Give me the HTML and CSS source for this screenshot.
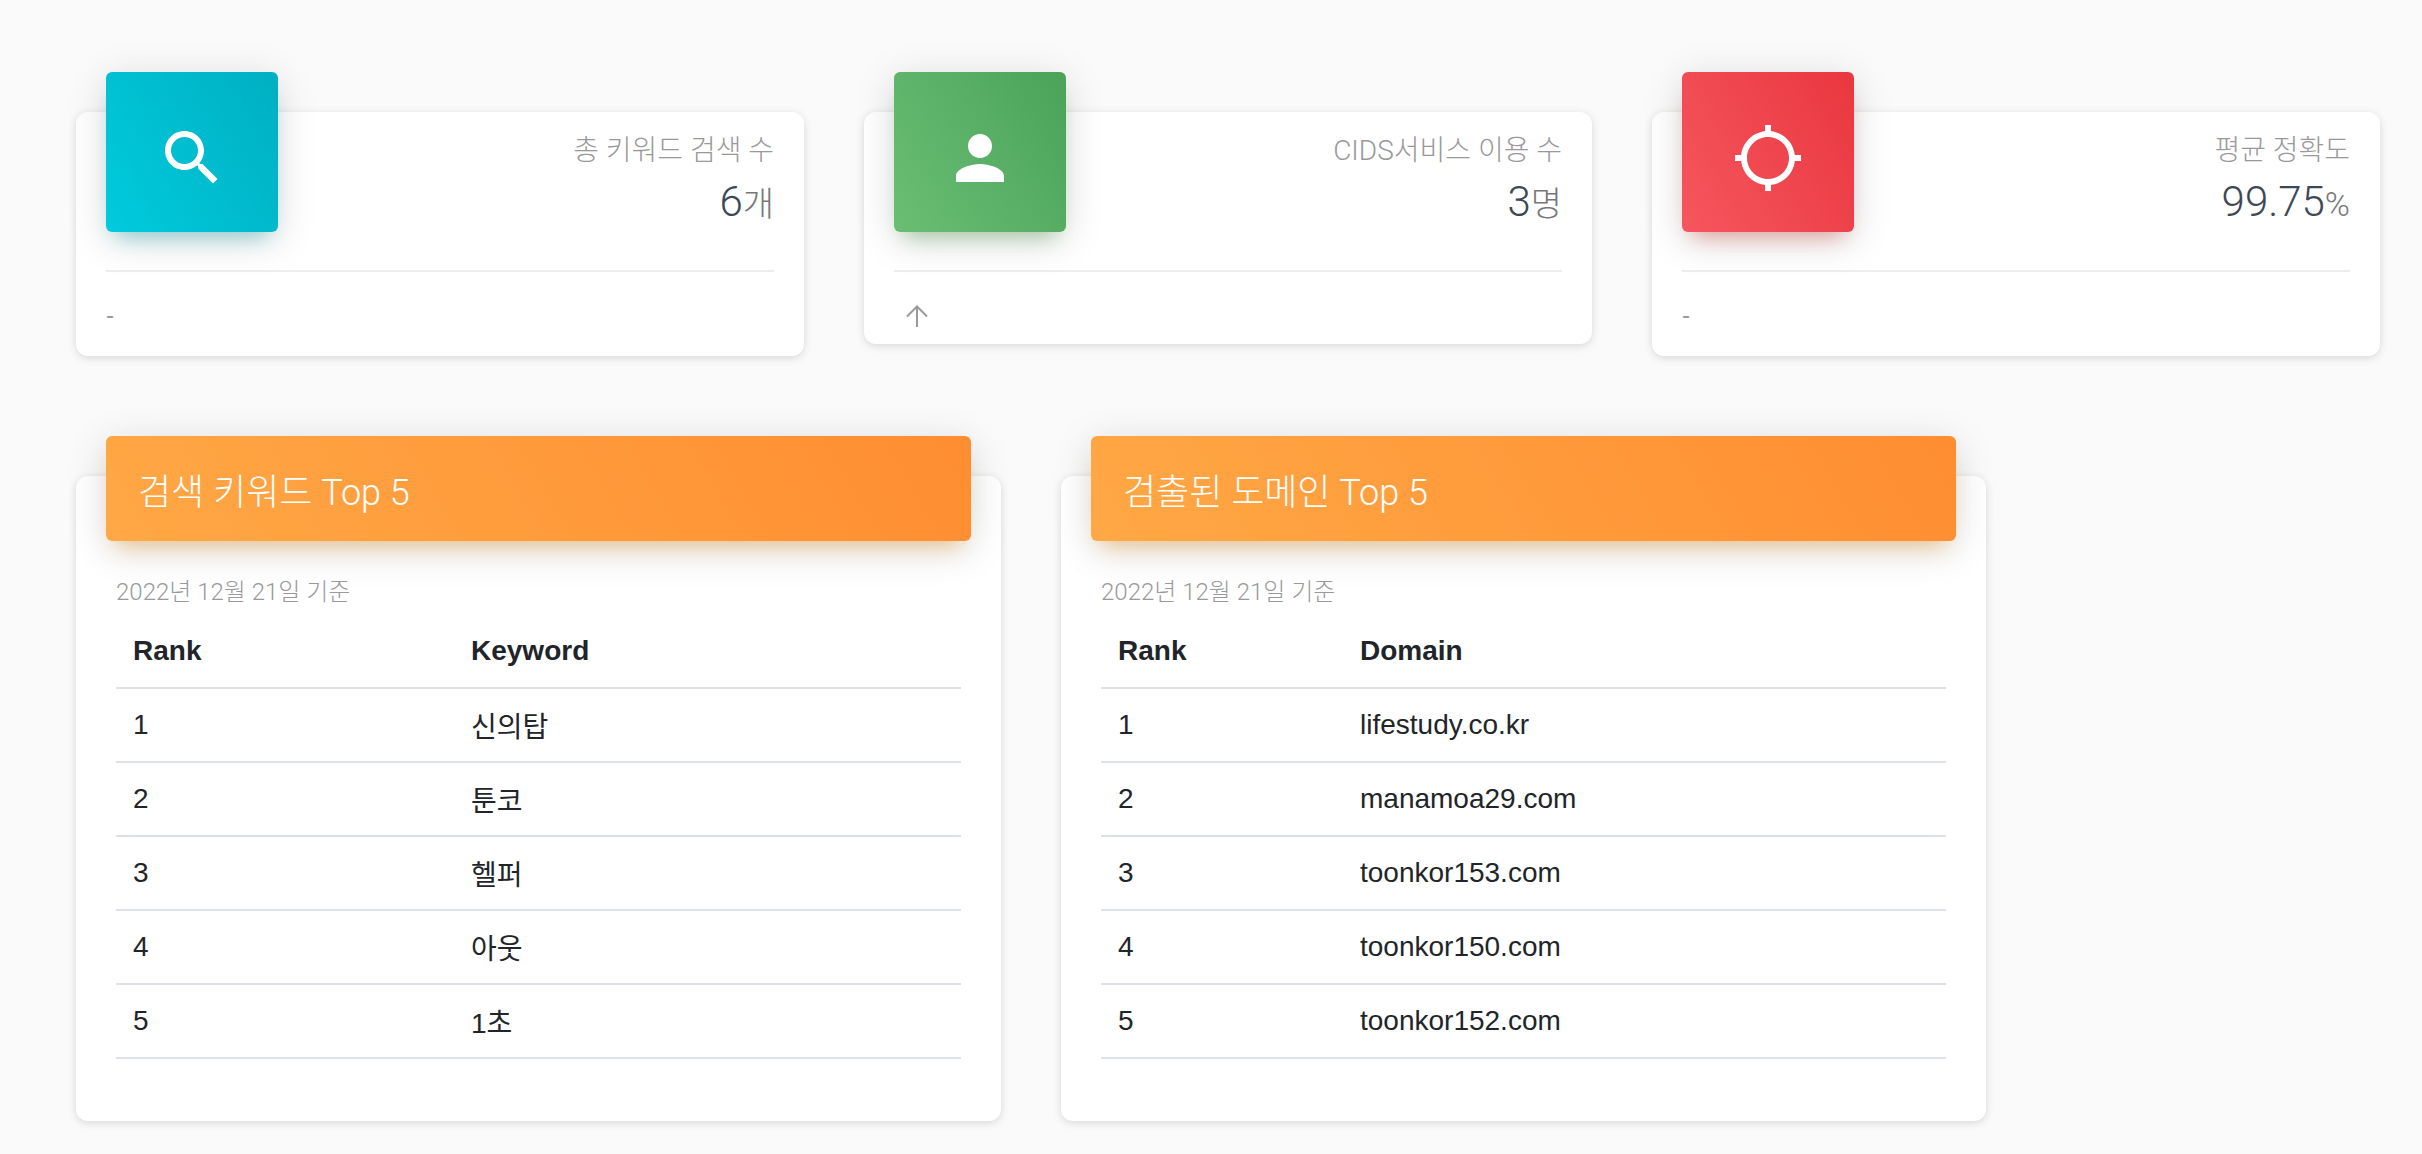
FILE: index.html
```html
<!DOCTYPE html>
<html lang="ko">
<head>
<meta charset="utf-8">
<title>CIDS Dashboard</title>
<link rel="stylesheet" href="styles.css">
</head>
<body>
<main class="page">
  <section class="stats">
    <article class="stat">
      <div class="stat-top">
        <div class="stat-icon cyan">
          <svg viewBox="0 0 24 24"><path d="M15.5 14h-.79l-.28-.27C15.41 12.59 16 11.11 16 9.5 16 5.91 13.09 3 9.5 3S3 5.91 3 9.5 5.91 16 9.5 16c1.61 0 3.09-.59 4.23-1.57l.27.28v.79l5 4.99L20.49 19l-4.99-5zm-6 0C7.01 14 5 11.99 5 9.5S7.01 5 9.5 5 14 7.01 14 9.5 11.99 14 9.5 14z"/></svg>
        </div>
        <div class="stat-text">
          <p class="stat-label">총 키워드 검색 수</p>
          <h3 class="stat-value">6<small>개</small></h3>
        </div>
      </div>
      <div class="stat-foot">-</div>
    </article>
    <article class="stat">
      <div class="stat-top">
        <div class="stat-icon green">
          <svg viewBox="0 0 24 24"><path d="M12 12c2.21 0 4-1.79 4-4s-1.79-4-4-4-4 1.79-4 4 1.79 4 4 4zm0 2c-2.67 0-8 1.34-8 4v2h16v-2c0-2.66-5.33-4-8-4z"/></svg>
        </div>
        <div class="stat-text">
          <p class="stat-label">CIDS서비스 이용 수</p>
          <h3 class="stat-value">3<small>명</small></h3>
        </div>
      </div>
      <div class="stat-foot stat-foot-icon">
        <svg class="arrow" viewBox="0 0 22 22"><path d="M11 22V1.5M1 11.5 11 1.5l10 10"/></svg>
      </div>
    </article>
    <article class="stat">
      <div class="stat-top">
        <div class="stat-icon red">
          <svg viewBox="0 0 24 24"><path d="M20.94 11c-.46-4.17-3.77-7.48-7.94-7.94V1h-2v2.06C6.83 3.52 3.52 6.83 3.06 11H1v2h2.06c.46 4.17 3.77 7.48 7.94 7.94V23h2v-2.06c4.17-.46 7.48-3.77 7.94-7.94H23v-2h-2.06zM12 19c-3.87 0-7-3.13-7-7s3.13-7 7-7 7 3.13 7 7-3.13 7-7 7z"/></svg>
        </div>
        <div class="stat-text">
          <p class="stat-label">평균 정확도</p>
          <h3 class="stat-value">99.75<small>%</small></h3>
        </div>
      </div>
      <div class="stat-foot">-</div>
    </article>
  </section>

  <section class="panels">
    <article class="panel">
      <header class="panel-head"><h4>검색 키워드 Top 5</h4></header>
      <div class="panel-body">
        <p class="panel-date">2022년 12월 21일 기준</p>
        <table class="rank-table keyword-table">
          <thead><tr><th>Rank</th><th>Keyword</th></tr></thead>
          <tbody>
            <tr><td>1</td><td>신의탑</td></tr>
            <tr><td>2</td><td>툰코</td></tr>
            <tr><td>3</td><td>헬퍼</td></tr>
            <tr><td>4</td><td>아웃</td></tr>
            <tr><td>5</td><td>1초</td></tr>
          </tbody>
        </table>
      </div>
    </article>
    <article class="panel">
      <header class="panel-head"><h4>검출된 도메인 Top 5</h4></header>
      <div class="panel-body">
        <p class="panel-date">2022년 12월 21일 기준</p>
        <table class="rank-table domain-table">
          <thead><tr><th>Rank</th><th>Domain</th></tr></thead>
          <tbody>
            <tr><td>1</td><td>lifestudy.co.kr</td></tr>
            <tr><td>2</td><td>manamoa29.com</td></tr>
            <tr><td>3</td><td>toonkor153.com</td></tr>
            <tr><td>4</td><td>toonkor150.com</td></tr>
            <tr><td>5</td><td>toonkor152.com</td></tr>
          </tbody>
        </table>
      </div>
    </article>
  </section>
</main>
</body>
</html>
```

FILE: styles.css
```css
* { box-sizing: border-box; }

html, body {
  margin: 0;
  height: 100%;
  overflow: hidden;
  background: #fafafa;
}

body {
  font-family: "Liberation Sans", "Noto Sans CJK KR", sans-serif;
  color: #212529;
}

.page {
  padding: 112px 42px 0 76px;
}

/* stat cards */
.stats {
  display: flex;
  gap: 60px;
  align-items: flex-start;
}

.stat {
  width: 728px;
  background: #fff;
  border-radius: 12px;
  box-shadow: 0 2px 8px rgba(0, 0, 0, .14);
}

.stat-top {
  display: flex;
  justify-content: space-between;
  margin: 0 30px;
  height: 160px;
  border-bottom: 2px solid #eee;
}

.stat-icon {
  width: 172px;
  height: 160px;
  margin-top: -40px;
  padding-top: 50px;
  border-radius: 6px;
  display: flex;
  justify-content: center;
  align-items: flex-start;
}

.stat-icon svg {
  width: 72px;
  height: 72px;
  fill: #fff;
}

.cyan {
  background: linear-gradient(60deg, #00cbdd, #00afc2);
  box-shadow: 0 8px 40px rgba(0, 0, 0, .14), 0 14px 20px -10px rgba(0, 172, 193, .4);
}

.green {
  background: linear-gradient(60deg, #6abe74, #4aa359);
  box-shadow: 0 8px 40px rgba(0, 0, 0, .14), 0 14px 20px -10px rgba(67, 160, 71, .4);
}

.red {
  background: linear-gradient(60deg, #f6565f, #e9373f);
  box-shadow: 0 8px 40px rgba(0, 0, 0, .14), 0 14px 20px -10px rgba(229, 57, 53, .4);
}

.stat-text {
  text-align: right;
  padding-top: 20px;
}

.stat-label {
  margin: 0;
  font-family: Roboto, "Noto Sans CJK KR", sans-serif;
  font-weight: 300;
  font-size: 28px;
  line-height: 38px;
  color: #999;
}

.stat-value {
  margin: 9px 0 0;
  font-family: Roboto, "Noto Sans CJK KR", sans-serif;
  font-weight: 300;
  font-size: 42px;
  line-height: 46px;
  color: #3c4858;
}

.stat-value small {
  font-size: 34px;
  color: #777;
}

.stat-foot {
  height: 84px;
  margin: 0 30px;
  font-size: 24px;
  line-height: 86px;
  color: #999;
}

.stat-foot-icon {
  height: 72px;
  padding: 33px 0 0 12px;
  line-height: 0;
}

.arrow {
  width: 22px;
  height: 22px;
  fill: none;
  stroke: #999;
  stroke-width: 2;
}

/* ranking panels */
.panels {
  display: flex;
  gap: 60px;
  margin-top: 120px;
  align-items: flex-start;
}

.panel {
  width: 925px;
  height: 645px;
  background: #fff;
  border-radius: 12px;
  box-shadow: 0 2px 8px rgba(0, 0, 0, .14);
}

.panel-head {
  height: 105px;
  margin: -40px 30px 0;
  padding: 0 32px;
  display: flex;
  align-items: center;
  border-radius: 6px;
  background: linear-gradient(60deg, #ffa845, #ff8d32);
  box-shadow: 0 8px 40px rgba(0, 0, 0, .14), 0 14px 20px -10px rgba(255, 152, 0, .4);
}

.panel-head h4 {
  margin: 0;
  font-family: Roboto, "Noto Sans CJK KR", sans-serif;
  font-weight: 300;
  font-size: 36px;
  color: #fff;
}

.panel-body {
  padding: 33px 40px 0;
}

.panel-date {
  margin: 0;
  font-family: Roboto, "Noto Sans CJK KR", sans-serif;
  font-weight: 300;
  font-size: 24px;
  line-height: 36px;
  color: #999;
}

.rank-table {
  width: 845px;
  margin-top: 4px;
  border-collapse: collapse;
  table-layout: fixed;
  font-size: 28px;
}

.rank-table th,
.rank-table td {
  height: 74px;
  padding: 0 17px;
  text-align: left;
  border-bottom: 2px solid #dee2e6;
}

.rank-table th {
  font-weight: 700;
}

.keyword-table th:first-child { width: 338px; }
.domain-table th:first-child { width: 242px; }
```
